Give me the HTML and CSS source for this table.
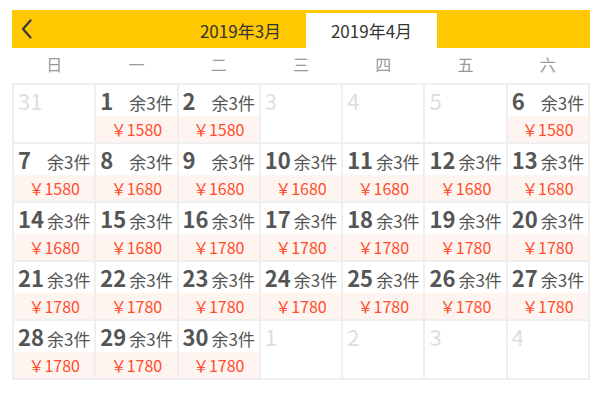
FILE: index.html
```html
<!DOCTYPE html>
<html lang="zh">
<head>
<meta charset="utf-8">
<link rel="stylesheet" href="styles.css">
</head>
<body>
<div class="cal">
  <div class="bar">
    <div class="back">
      <svg width="14" height="22" viewBox="0 0 14 22"><path d="M10.5 2.5 L3 11 L10.5 19.5" fill="none" stroke="#3a3a3a" stroke-width="2.3" stroke-linecap="round" stroke-linejoin="round"/></svg>
    </div>
    <div class="tabs">
      <div class="tab">2019年3月</div>
      <div class="tab active">2019年4月</div>
    </div>
  </div>
  <div class="week">
    <span>日</span><span>一</span><span>二</span><span>三</span><span>四</span><span>五</span><span>六</span>
  </div>
  <div class="grid">
    <div class="cell off"><div class="top"><b>31</b></div></div>
    <div class="cell"><div class="top"><b>1</b><i>余3件</i></div><div class="price">￥1580</div></div>
    <div class="cell"><div class="top"><b>2</b><i>余3件</i></div><div class="price">￥1580</div></div>
    <div class="cell off"><div class="top"><b>3</b></div></div>
    <div class="cell off"><div class="top"><b>4</b></div></div>
    <div class="cell off"><div class="top"><b>5</b></div></div>
    <div class="cell"><div class="top"><b>6</b><i>余3件</i></div><div class="price">￥1580</div></div>

    <div class="cell"><div class="top"><b>7</b><i>余3件</i></div><div class="price">￥1580</div></div>
    <div class="cell"><div class="top"><b>8</b><i>余3件</i></div><div class="price">￥1680</div></div>
    <div class="cell"><div class="top"><b>9</b><i>余3件</i></div><div class="price">￥1680</div></div>
    <div class="cell"><div class="top"><b>10</b><i>余3件</i></div><div class="price">￥1680</div></div>
    <div class="cell"><div class="top"><b>11</b><i>余3件</i></div><div class="price">￥1680</div></div>
    <div class="cell"><div class="top"><b>12</b><i>余3件</i></div><div class="price">￥1680</div></div>
    <div class="cell"><div class="top"><b>13</b><i>余3件</i></div><div class="price">￥1680</div></div>

    <div class="cell"><div class="top"><b>14</b><i>余3件</i></div><div class="price">￥1680</div></div>
    <div class="cell"><div class="top"><b>15</b><i>余3件</i></div><div class="price">￥1680</div></div>
    <div class="cell"><div class="top"><b>16</b><i>余3件</i></div><div class="price">￥1780</div></div>
    <div class="cell"><div class="top"><b>17</b><i>余3件</i></div><div class="price">￥1780</div></div>
    <div class="cell"><div class="top"><b>18</b><i>余3件</i></div><div class="price">￥1780</div></div>
    <div class="cell"><div class="top"><b>19</b><i>余3件</i></div><div class="price">￥1780</div></div>
    <div class="cell"><div class="top"><b>20</b><i>余3件</i></div><div class="price">￥1780</div></div>

    <div class="cell"><div class="top"><b>21</b><i>余3件</i></div><div class="price">￥1780</div></div>
    <div class="cell"><div class="top"><b>22</b><i>余3件</i></div><div class="price">￥1780</div></div>
    <div class="cell"><div class="top"><b>23</b><i>余3件</i></div><div class="price">￥1780</div></div>
    <div class="cell"><div class="top"><b>24</b><i>余3件</i></div><div class="price">￥1780</div></div>
    <div class="cell"><div class="top"><b>25</b><i>余3件</i></div><div class="price">￥1780</div></div>
    <div class="cell"><div class="top"><b>26</b><i>余3件</i></div><div class="price">￥1780</div></div>
    <div class="cell"><div class="top"><b>27</b><i>余3件</i></div><div class="price">￥1780</div></div>

    <div class="cell"><div class="top"><b>28</b><i>余3件</i></div><div class="price">￥1780</div></div>
    <div class="cell"><div class="top"><b>29</b><i>余3件</i></div><div class="price">￥1780</div></div>
    <div class="cell"><div class="top"><b>30</b><i>余3件</i></div><div class="price">￥1780</div></div>
    <div class="cell off"><div class="top"><b>1</b></div></div>
    <div class="cell off"><div class="top"><b>2</b></div></div>
    <div class="cell off"><div class="top"><b>3</b></div></div>
    <div class="cell off"><div class="top"><b>4</b></div></div>
  </div>
</div>
</body>
</html>
```

FILE: styles.css
```css
html, body {
  background: #fff;
}
body {
  margin: 10px 10px 0 12px;
  font-family: "Noto Sans CJK SC", "Noto Sans", sans-serif;
  color: #333;
}
.bar {
  height: 38px;
  background: #ffc800;
  display: flex;
  align-items: flex-end;
}
.back {
  width: 40px;
  height: 38px;
  display: flex;
  align-items: center;
  padding-left: 8px;
  box-sizing: border-box;
}
.back svg {
  display: block;
}
.tabs {
  display: flex;
  margin-left: 123px;
}
.tab {
  width: 131px;
  height: 35px;
  line-height: 35px;
  text-align: center;
  font-size: 17px;
  color: #333;
}
.tab.active {
  background: #fff;
}
.week {
  display: grid;
  grid-template-columns: repeat(7, 1fr);
  gap: 2px;
  padding: 0 2px 3px;
  height: 35px;
  box-sizing: border-box;
  align-items: center;
  text-align: center;
  font-size: 16px;
  color: #999;
}
.grid {
  display: grid;
  grid-template-columns: repeat(7, 1fr);
  gap: 2px;
  padding: 2px;
  background: #efefef;
}
.cell {
  background: #fff;
  height: 57px;
}
.top {
  height: 31px;
  line-height: 31px;
  padding-left: 4px;
  display: flex;
  align-items: baseline;
  white-space: nowrap;
}
.top b {
  display: inline-block;
  min-width: 29px;
  font-size: 22px;
  font-weight: 700;
  color: #555;
}
.top i {
  font-style: normal;
  font-size: 17px;
  color: #555;
}
.off .top b {
  font-weight: 400;
  color: #dedede;
}
.price {
  height: 26px;
  line-height: 26px;
  background: #fff5f0;
  text-align: center;
  font-size: 16px;
  color: #ff4d2e;
}
```
